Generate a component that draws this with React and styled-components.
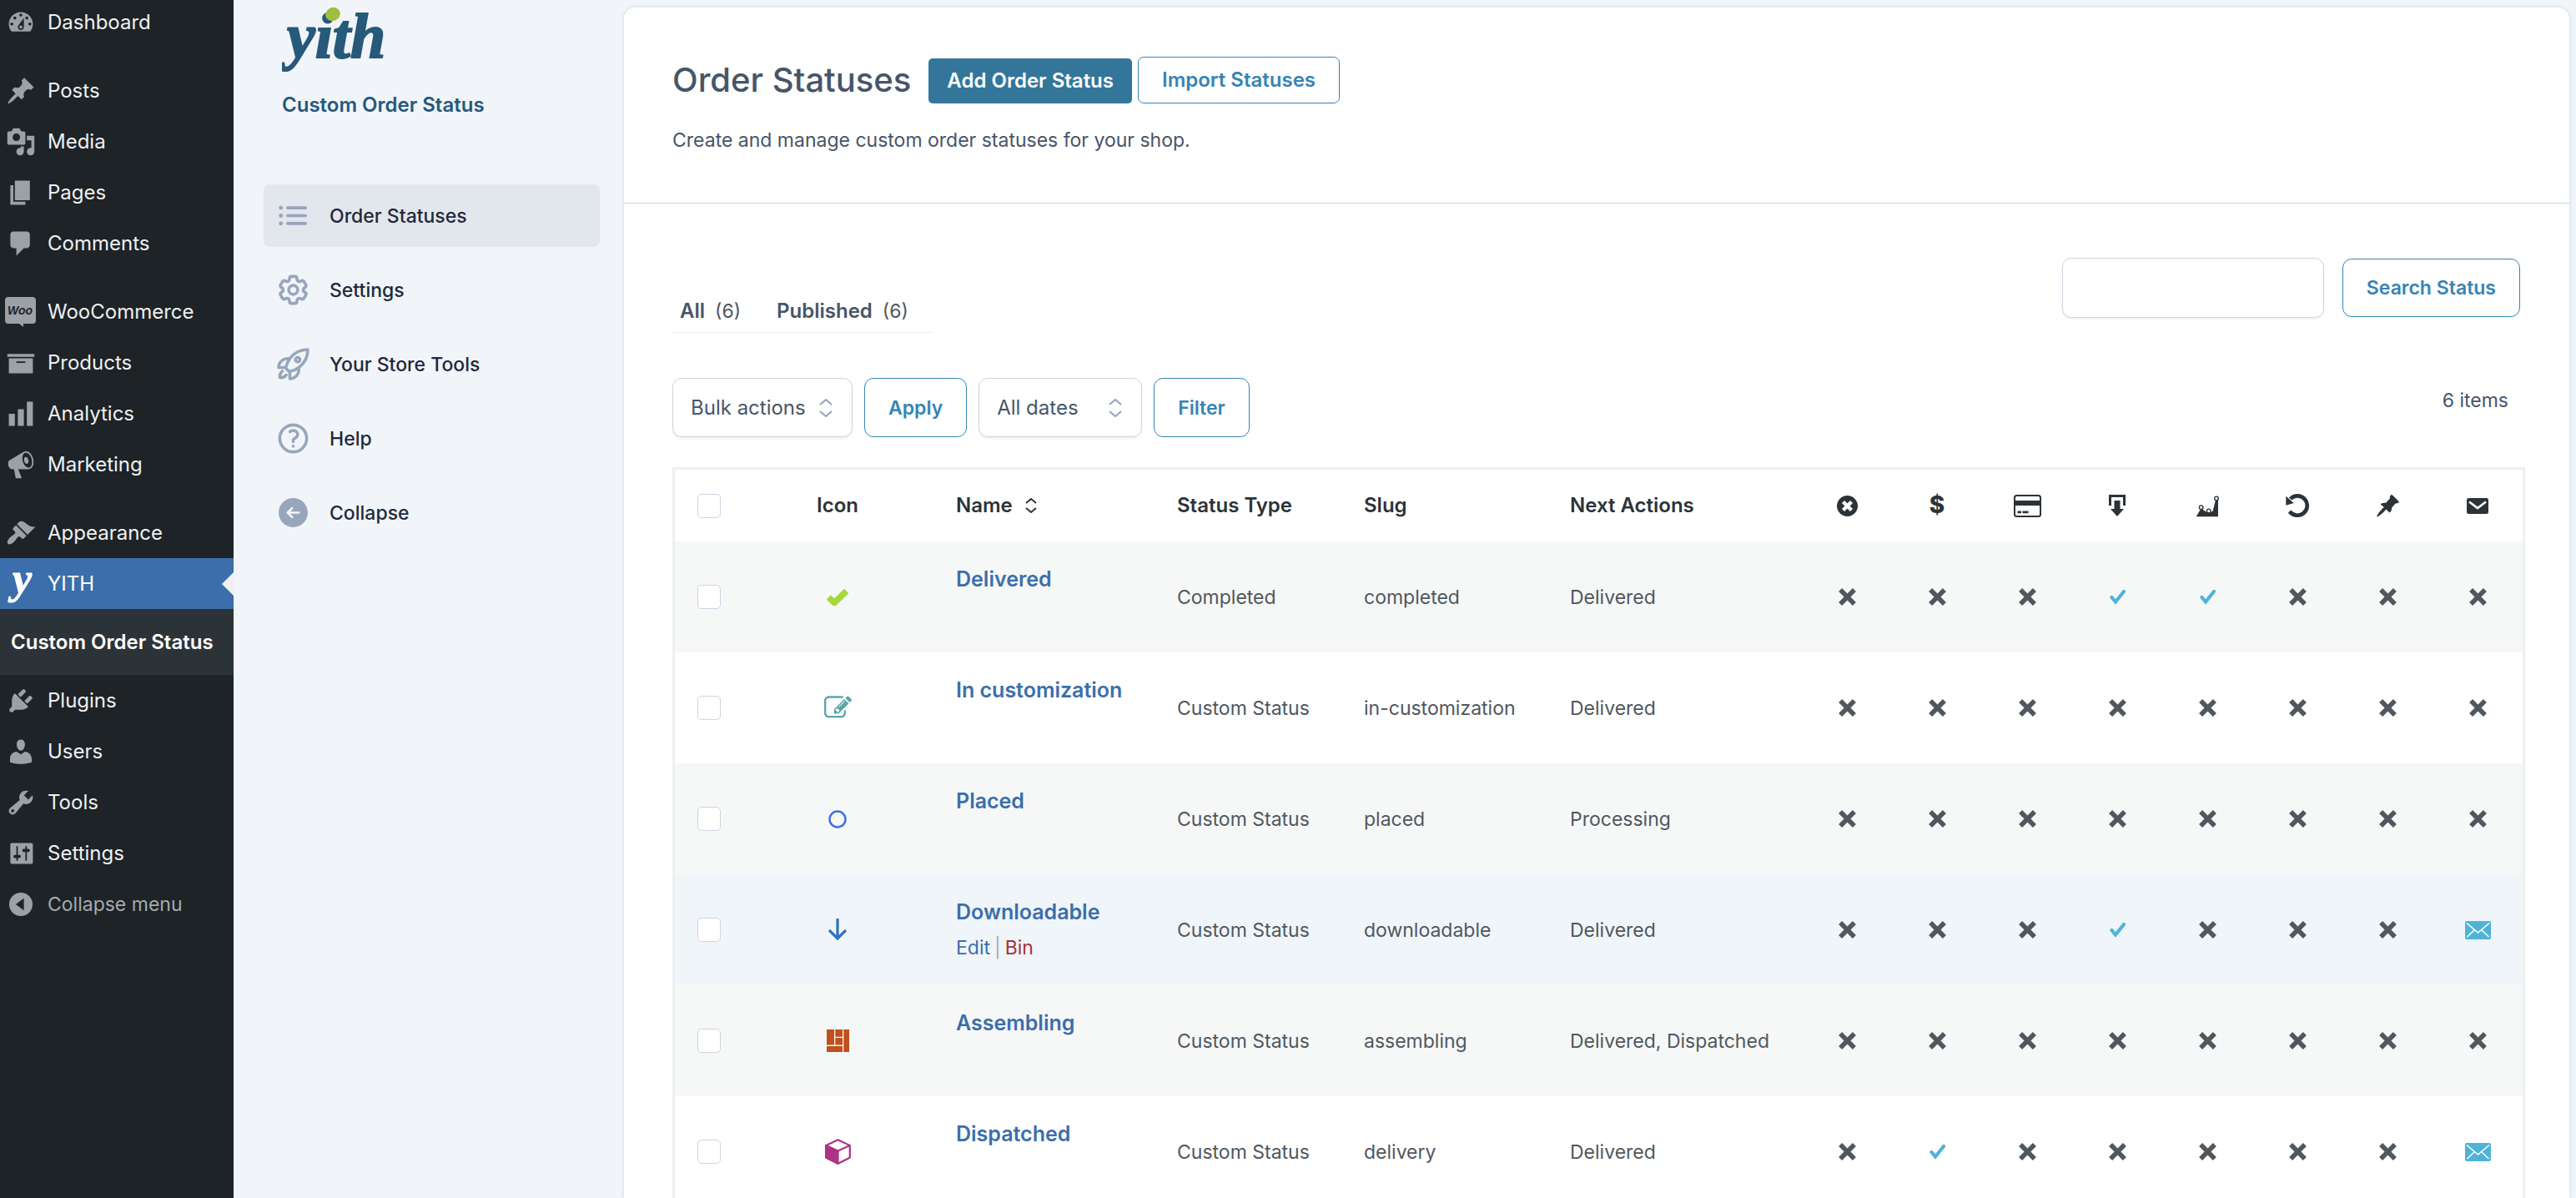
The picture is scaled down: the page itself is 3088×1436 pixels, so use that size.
import React, { useState } from "react";
import styled, { createGlobalStyle, css } from "styled-components";
import {
  HiArrowLeftCircle,
  HiOutlineCog6Tooth,
  HiOutlineListBullet,
  HiOutlineQuestionMarkCircle,
  HiOutlineRocketLaunch
} from "react-icons/hi2";

const COLORS = {
  sidebar: "#1d2327",
  submenu: "#2c3338",
  highlight: "#3b6eab",
  panel: "#f1f5fa",
  border: "#cbd5e1",
  action: "#3684b3",
  slate: "#475569",
  text: "#50575e",
  dark: "#2c3338",
  sky: "#4fb3d8"
};

// 20x20 glyphs of the admin menu
const GLYPHS = {
  dashboard:
    "M3.76 16h12.48c1.1-1.37 1.76-3.11 1.76-5 0-4.42-3.58-8-8-8s-8 3.58-8 8c0 1.89.66 3.63 1.76 5zM10 4c.55 0 1 .45 1 1s-.45 1-1 1-1-.45-1-1 .45-1 1-1zM6 6c.55 0 1 .45 1 1s-.45 1-1 1-1-.45-1-1 .45-1 1-1zm8 0c.55 0 1 .45 1 1s-.45 1-1 1-1-.45-1-1 .45-1 1-1zm-5.37 5.55L12 7v6c0 1.1-.9 2-2 2s-2-.9-2-2c0-.57.24-1.08.63-1.45zM4 10c.55 0 1 .45 1 1s-.45 1-1 1-1-.45-1-1 .45-1 1-1zm12 0c.55 0 1 .45 1 1s-.45 1-1 1-1-.45-1-1 .45-1 1-1zm-5 3c0-.55-.45-1-1-1s-1 .45-1 1 .45 1 1 1 1-.45 1-1z",
  posts:
    "M10.44 3.02l1.82-1.82 6.36 6.35-1.83 1.82c-1.05-.68-2.48-.57-3.41.36l-.75.75c-.92.93-1.04 2.35-.35 3.41l-1.83 1.82-2.41-2.41-2.8 2.79c-.42.42-3.38 2.71-3.8 2.29s1.86-3.39 2.28-3.81l2.79-2.79L4.1 9.36l1.83-1.82c1.05.69 2.48.57 3.4-.36l.75-.75c.93-.92 1.05-2.35.36-3.41z",
  media:
    "M13 11V4c0-.55-.45-1-1-1h-1.67L9 1H5L3.67 3H2c-.55 0-1 .45-1 1v7c0 .55.45 1 1 1h10c.55 0 1-.45 1-1zM7 4.5c1.38 0 2.5 1.12 2.5 2.5S8.38 9.5 7 9.5 4.5 8.38 4.5 7 5.62 4.5 7 4.5zM14 6h5v10.5c0 1.38-1.12 2.5-2.5 2.5S14 17.88 14 16.5s1.12-2.5 2.5-2.5c.17 0 .34.02.5.05V9h-3V6zm-4 8.05V13h2v3.5c0 1.38-1.12 2.5-2.5 2.5S7 17.88 7 16.5 8.12 14 9.5 14c.17 0 .34.02.5.05z",
  pages: "M6 15V2h10v13H6zm-1 1h8v2H3V5h2v11z",
  comments:
    "M5 2h9c1.1 0 2 .9 2 2v7c0 1.1-.9 2-2 2h-2l-5 5v-5H5c-1.1 0-2-.9-2-2V4c0-1.1.9-2 2-2z",
  products: "M19 4v2H1V4h18zM2 7h16v10H2V7zm11 3V9H7v1h6z",
  analytics: "M18 18V2h-4v16h4zm-6 0V7H8v11h4zm-6 0v-8H2v8h4z",
  marketing:
    "M18.15 5.94c.46 1.62.38 3.22-.02 4.48-.42 1.28-1.26 2.18-2.3 2.48-.16.06-.26.06-.4.06-.06.02-.12.02-.18.02-.06.02-.14.02-.22.02h-6.8l2.22 5.5c.02.14-.06.26-.14.34-.08.1-.24.16-.34.16H6.95c-.1 0-.26-.06-.34-.16-.08-.08-.16-.2-.14-.34l-1-5.5H4.25l-.02-.02c-.5.06-1.08-.18-1.54-.62s-.88-1.08-1.06-1.88c-.24-.8-.2-1.56-.02-2.2.18-.62.58-1.08 1.06-1.3l.02-.02 9-5.4c.1-.06.18-.1.24-.16.06-.04.14-.08.24-.12.16-.08.28-.12.5-.18 1.04-.3 2.24.1 3.22.98s1.84 2.24 2.26 3.86zm-2.58 5.98h-.02c.4-.1.74-.34 1.04-.7.58-.7.86-1.76.86-3.04 0-.64-.1-1.3-.28-1.98-.34-1.36-1.02-2.5-1.78-3.24s-1.68-1.1-2.46-.88c-.82.22-1.4.96-1.7 2-.32 1.04-.28 2.36.06 3.72.38 1.36 1 2.5 1.8 3.24.78.74 1.62 1.1 2.48.88zm-2.54-7.08c.22-.04.42-.02.62.04.38.16.76.48 1.02 1s.42 1.2.42 1.78c0 .3-.04.56-.12.8-.18.48-.44.84-.86.94-.34.1-.8-.06-1.14-.4s-.64-.86-.78-1.5c-.18-.62-.12-1.24.02-1.72s.48-.84.82-.94z",
  appearance:
    "M14.48 11.06L7.41 3.99l1.5-1.5c.5-.56 2.3-.47 3.51.32 1.21.8 1.43 1.28 2.91 2.1 1.18.64 2.45 1.26 4.45.85zm-.71.71L6.7 4.7 4.93 6.47c-.39.39-.39 1.02 0 1.41l1.06 1.06c.39.39.39 1.03 0 1.42-.6.6-1.43 1.11-2.21 1.69-.35.26-.7.53-1.01.84C1.43 14.23.4 16.08 1.4 17.07c.99 1 2.84-.03 4.18-1.36.31-.31.58-.66.85-1.02.57-.78 1.08-1.61 1.69-2.21.39-.39 1.02-.39 1.41 0l1.06 1.06c.39.39 1.02.39 1.41 0z",
  plugins:
    "M13.11 4.36L9.87 7.6 8 5.73l3.24-3.24c.35-.34 1.05-.2 1.56.32.52.51.66 1.21.31 1.55zm-8 1.77l.91-1.12 9.01 9.01-1.19.84c-.71.71-2.63 1.16-3.82 1.16H6.14L4.9 17.26c-.59.59-1.54.59-2.12 0-.59-.58-.59-1.53 0-2.12l1.24-1.24v-3.88c0-1.13.4-3.19 1.09-3.89zm7.26 3.97l3.24-3.24c.34-.35 1.04-.21 1.55.31.52.51.66 1.21.31 1.55l-3.24 3.25z",
  users:
    "M10 9.25c-2.27 0-2.73-3.44-2.73-3.44C7 4.02 7.82 2 9.97 2c2.16 0 2.98 2.02 2.71 3.81 0 0-.41 3.44-2.68 3.44zm0 2.57L12.72 10c2.39 0 4.52 2.33 4.52 4.53v2.49s-3.65 1.13-7.24 1.13c-3.65 0-7.24-1.13-7.24-1.13v-2.49c0-2.25 1.94-4.48 4.47-4.48z",
  tools:
    "M16.68 9.77c-1.34 1.34-3.3 1.67-4.95.99l-5.41 6.52c-.99.99-2.59.99-3.58 0s-.99-2.59 0-3.57l6.52-5.42c-.68-1.65-.35-3.61.99-4.95 1.28-1.28 3.12-1.62 4.72-1.06l-2.89 2.89 2.82 2.82 2.86-2.87c.53 1.58.18 3.39-1.08 4.65zM3.81 16.21c.4.39 1.04.39 1.43 0 .4-.4.4-1.04 0-1.43-.39-.4-1.03-.4-1.43 0-.39.39-.39 1.03 0 1.43z",
  settings:
    "M18 16V4c0-.55-.45-1-1-1H4c-.55 0-1 .45-1 1v12c0 .55.45 1 1 1h13c.55 0 1-.45 1-1zM8 11h1c.55 0 1 .45 1 1s-.45 1-1 1H8v1.5c0 .28-.22.5-.5.5s-.5-.22-.5-.5V13H6c-.55 0-1-.45-1-1s.45-1 1-1h1V5.5c0-.28.22-.5.5-.5s.5.22.5.5V11zm5-2h-1c-.55 0-1-.45-1-1s.45-1 1-1h1V5.5c0-.28.22-.5.5-.5s.5.22.5.5V7h1c.55 0 1 .45 1 1s-.45 1-1 1h-1v5.500c0 .28-.22.5-.5.5s-.5-.22-.5-.5V9z",
  collapse:
    "M10 2.2a7.8 7.8 0 1 0 0 15.6 7.8 7.8 0 1 0 0-15.6zM12 6v8l-5.4-4z"
};

const MENU = [
  [["dashboard", "Dashboard"]],
  [
    ["posts", "Posts"],
    ["media", "Media"],
    ["pages", "Pages"],
    ["comments", "Comments"]
  ],
  [
    ["woo", "WooCommerce"],
    ["products", "Products"],
    ["analytics", "Analytics"],
    ["marketing", "Marketing"]
  ],
  [
    ["appearance", "Appearance"],
    ["yith", "YITH"],
    ["plugins", "Plugins"],
    ["users", "Users"],
    ["tools", "Tools"],
    ["settings", "Settings"]
  ]
];

const TABS = [
  ["Order Statuses", HiOutlineListBullet],
  ["Settings", HiOutlineCog6Tooth],
  ["Your Store Tools", HiOutlineRocketLaunch],
  ["Help", HiOutlineQuestionMarkCircle],
  ["Collapse", HiArrowLeftCircle]
];

// flags: x = no, v = yes, m = e-mail sent
const STATUSES = [
  ["Delivered", "check", "Completed", "completed", "Delivered", "xxxvvxxx"],
  ["In customization", "edit", "Custom Status", "in-customization", "Delivered", "xxxxxxxx"],
  ["Placed", "circle", "Custom Status", "placed", "Processing", "xxxxxxxx"],
  ["Downloadable", "arrow", "Custom Status", "downloadable", "Delivered", "xxxvxxxm"],
  ["Assembling", "blocks", "Custom Status", "assembling", "Delivered, Dispatched", "xxxxxxxx"],
  ["Dispatched", "box", "Custom Status", "delivery", "Delivered", "xvxxxxxm"]
];

const GlobalStyle = createGlobalStyle`
  * {
    box-sizing: border-box;
  }
  body {
    margin: 0;
    background: ${COLORS.panel};
    font-family: Inter, "Liberation Sans", sans-serif;
    font-size: 23px;
    line-height: 30px;
    color: ${COLORS.text};
  }
  button, input, select {
    font: inherit;
    margin: 0;
  }
  a {
    text-decoration: none;
  }
  svg {
    display: block;
    flex-shrink: 0;
  }
`;

const Shell = styled.div`
  height: 100vh;
  display: flex;
  overflow: hidden;
`;

const Sidebar = styled.nav`
  width: 280px;
  flex-shrink: 0;
  margin-top: -4px;
  background: ${COLORS.sidebar};
`;

const MenuGroup = styled.ul`
  list-style: none;
  margin: 0 0 21px;
  padding: 0;

  &:last-of-type {
    margin: 0;
  }
`;

const menuRow = css`
  position: relative;
  width: 100%;
  height: 61px;
  display: flex;
  align-items: center;
  gap: 14px;
  padding: 0 7px;
  border: 0;
  font-size: 24px;
`;

const MenuLink = styled.a`
  ${menuRow}
  color: ${props => (props.$current ? "#fff" : "#f0f0f1")};
  background: ${props => (props.$current ? COLORS.highlight : "none")};
`;

const MenuIcon = styled.svg`
  width: 36px;
  height: 36px;
  fill: ${props => (props.$current ? "#fff" : "#9ca1a7")};
  overflow: visible;
`;

const CollapseButton = styled.button`
  ${menuRow}
  background: none;
  color: #a7aaad;
  font-size: 23px;
`;

const CurrentArrow = styled.span`
  position: absolute;
  right: 0;
  border: 14px solid transparent;
  border-left-width: 0;
  border-right-color: #f0f0f1;
`;

const SubmenuLink = styled.a`
  height: 79px;
  display: flex;
  align-items: center;
  padding: 0 13px;
  background: ${COLORS.submenu};
  color: #fff;
  font-size: 24px;
  font-weight: 600;
`;

const PluginPanel = styled.aside`
  width: 468px;
  flex-shrink: 0;
  padding: 0 29px 0 36px;
`;

const Brand = styled.div`
  padding: 0 22px;
  margin-bottom: 80px;
`;

const BrandName = styled.a`
  display: block;
  margin-top: 11px;
  color: #26597a;
  font-size: 24px;
  font-weight: 600;
`;

const PanelNav = styled.nav`
  display: flex;
  flex-direction: column;
  gap: 14px;
`;

const PanelLink = styled.a`
  height: 75px;
  display: flex;
  align-items: center;
  gap: 22px;
  padding: 0 14px;
  border-radius: 7px;
  background: ${props => (props.$active ? "#e2e6ed" : "none")};
  color: #1e293b;
  font-weight: 500;

  svg {
    width: 43px;
    height: 43px;
    color: #97a6bb;
  }

  svg[fill="none"] {
    stroke-width: 2;
  }
`;

const Card = styled.main`
  flex: 1;
  min-width: 0;
  margin: 9px 8px 0 0;
  background: #fff;
  border-radius: 14px 14px 0 0;
  box-shadow: 0 0 4px rgba(100, 116, 139, 0.25);
`;

const CardHeader = styled.header`
  padding: 59px 58px 60px;
  border-bottom: 1px solid ${COLORS.border};
`;

const TitleRow = styled.div`
  height: 56px;
  display: flex;
  align-items: flex-end;
  gap: 7px;
`;

const Title = styled.h1`
  margin: 0 14px 0 0;
  font-size: 40px;
  line-height: 56px;
  font-weight: 500;
  color: ${COLORS.slate};
`;

const Lead = styled.p`
  margin: 29px 0 0;
  color: ${COLORS.slate};
`;

const PrimaryButton = styled.button`
  height: 54px;
  padding: 0 22px;
  border: 0;
  border-radius: 5px;
  background: #34769a;
  color: #fff;
  font-size: 24px;
  font-weight: 600;
`;

const OutlineButton = styled.button`
  height: ${props => props.$height}px;
  padding: 0 28px;
  border: 1px solid ${COLORS.action};
  border-radius: ${props => (props.$height > 60 ? 11 : 7)}px;
  background: #fff;
  color: ${COLORS.action};
  font-size: ${props => (props.$height > 60 ? 23 : 24)}px;
  font-weight: 600;
`;

const CardBody = styled.div`
  padding: 65px 53px 0 58px;
`;

const Toolbar = styled.div`
  height: 90px;
  display: flex;
  justify-content: space-between;
  align-items: flex-end;
`;

const ViewList = styled.ul`
  display: flex;
  gap: 43px;
  list-style: none;
  margin: 0;
  padding: 0 29px 10px 9px;
  border-bottom: 1px solid #eceef0;
`;

const ViewLink = styled.a`
  display: flex;
  gap: 12px;
  font-weight: 600;
  font-size: 24px;
  color: ${COLORS.slate};
`;

const Count = styled.span`
  font-weight: 400;
  font-size: 23px;
  color: ${COLORS.text};
`;

const SearchForm = styled.form`
  align-self: flex-start;
  display: flex;
  align-items: center;
  gap: 22px;
  margin-right: 6px;
`;

const control = css`
  border: 1px solid ${COLORS.border};
  background: #fff;
  box-shadow: 0 2px 3px rgba(15, 23, 42, 0.06);
`;

const SearchInput = styled.input`
  ${control}
  width: 314px;
  height: 72px;
  padding: 0 22px;
  border-radius: 11px;
`;

const Filters = styled.div`
  display: flex;
  gap: 14px;
  margin: 54px 0 36px;
`;

const SelectBox = styled.div`
  position: relative;
  width: ${props => props.$width}px;

  svg {
    position: absolute;
    right: 24px;
    top: 25px;
    pointer-events: none;
  }
`;

const Select = styled.select`
  ${control}
  width: 100%;
  height: 71px;
  padding: 0 21px;
  border-radius: 11px;
  appearance: none;
  color: ${COLORS.slate};
  font-size: 24px;
`;

const ItemCount = styled.span`
  margin-left: auto;
  padding-right: 20px;
  line-height: 55px;
  color: ${COLORS.slate};
`;

const Table = styled.table`
  width: 100%;
  table-layout: fixed;
  border-spacing: 0;
  border: 3px solid #eef0f0;
`;

const HeadCell = styled.th`
  height: 86px;
  padding: 0 ${props => (props.$center ? 0 : 27)}px;
  text-align: ${props => (props.$center ? "center" : "left")};
  color: ${COLORS.dark};
  font-weight: 600;
  font-size: 24px;

  svg {
    margin: 0 auto;
  }
`;

const Dollar = styled.span`
  font-size: 28px;
  font-weight: 800;
`;

const SortLink = styled.a`
  display: flex;
  align-items: center;
  gap: 15px;
  color: inherit;

  svg {
    margin: 0;
  }
`;

const Row = styled.tr`
  background: #fff;

  &:nth-child(odd) {
    background: #f6f8f8;
  }

  ${props =>
    props.$hovered &&
    css`
      background: #f0f5fa;
    `}
`;

const Cell = styled.td`
  height: 133px;
  padding: 0 ${props => (props.$center ? 0 : 27)}px;

  > svg {
    margin: 0 auto;
  }
`;

const NameBlock = styled.div`
  min-height: 86px;
  line-height: 43px;
`;

const NameLink = styled.a`
  display: block;
  color: ${COLORS.highlight};
  font-size: 25px;
  font-weight: 600;
`;

const RowActions = styled.div`
  display: flex;
  gap: 5px;
  color: #a7aaad;
`;

const ActionLink = styled.a`
  color: ${props => (props.$danger ? "#a83232" : COLORS.highlight)};
`;

const Checkbox = styled.input`
  appearance: none;
  display: block;
  width: 28px;
  height: 29px;
  border: 1px solid ${COLORS.border};
  border-radius: 5px;
  background: #fff;

  &:checked {
    background: ${COLORS.action};
  }
`;

function MenuGlyph({ name, current }) {
  if (name === "woo") {
    return (
      <MenuIcon viewBox="0 0 36 36" aria-hidden="true">
        <path d="M3 0h29a4 4 0 0 1 4 4v24a4 4 0 0 1-4 4H21v4l-5-4H3a4 4 0 0 1-4-4V4a4 4 0 0 1 4-4z" />
        <text
          x="17"
          y="21"
          textAnchor="middle"
          fontFamily="Liberation Sans"
          fontSize="14"
          fontWeight="700"
          fontStyle="italic"
          fill={COLORS.sidebar}
        >
          Woo
        </text>
      </MenuIcon>
    );
  }
  if (name === "yith") {
    return (
      <MenuIcon $current={current} viewBox="0 0 36 36" aria-hidden="true">
        <text
          x="8"
          y="29"
          fontFamily="Liberation Serif"
          fontSize="52"
          fontWeight="700"
          fontStyle="italic"
          stroke="#fff"
          strokeWidth="1"
        >
          y
        </text>
      </MenuIcon>
    );
  }
  return (
    <MenuIcon viewBox="0 0 20 20" aria-hidden="true">
      <path fillRule="evenodd" d={GLYPHS[name]} />
    </MenuIcon>
  );
}

function Logo() {
  return (
    <svg width="140" height="100" viewBox="0 0 140 100">
      <text
        x="6"
        y="69"
        fill="#26597a"
        stroke="#26597a"
        strokeWidth="2"
        fontFamily="Liberation Serif"
        fontSize="76"
        fontWeight="700"
        fontStyle="italic"
      >
        yith
      </text>
      <ellipse cx="61" cy="17" rx="9" ry="8" fill="#a1bf3f" transform="rotate(-25 61 17)" />
    </svg>
  );
}

function Chevrons({ width, height, color, gap }) {
  const mid = height / 2;
  return (
    <svg width={width} height={height} fill="none" stroke={color} strokeWidth="2">
      <path d={`M1 ${mid - gap}L${width / 2} 1L${width - 1} ${mid - gap}`} />
      <path d={`M1 ${mid + gap}L${width / 2} ${height - 1}L${width - 1} ${mid + gap}`} />
    </svg>
  );
}

const HEAD_ICONS = [
  ["Can cancel", (
    <svg width="25" height="25" viewBox="0 0 25 25">
      <circle cx="12.5" cy="12.5" r="12.5" fill={COLORS.dark} />
      <path d="M7.5 7.5l10 10M17.5 7.5l-10 10" stroke="#fff" strokeWidth="4.4" />
    </svg>
  )],
  ["Can pay", <Dollar>$</Dollar>],
  ["Paid", (
    <svg width="33" height="27" viewBox="0 0 33 27">
      <rect x="1" y="1" width="31" height="25" rx="2.5" fill="none" stroke={COLORS.dark} strokeWidth="2" />
      <path d="M1 7h31v6H1zM4.5 19.5H9v2.7H4.5zM10.5 19.5h7v2.7h-7z" fill={COLORS.dark} />
    </svg>
  )],
  ["Downloads", (
    <svg width="20" height="26" viewBox="0 0 20 26" fill={COLORS.dark}>
      <path d="M0 0h20v13h-3V3H3v10H0z" />
      <path d="M6.500 7h7v10h4.500l-8 9-8-9h4.500z" />
    </svg>
  )],
  ["Reports", (
    <svg width="28" height="27" viewBox="0 0 84 80">
      <path d="M2 78L20 48l16 12 12 6 14-8L73 14h8v64z" fill={COLORS.dark} />
      <g fill="#fff" stroke={COLORS.dark} strokeWidth="4">
        <circle cx="20" cy="45" r="7" />
        <circle cx="75" cy="13" r="7" />
        <circle cx="47" cy="58" r="7" />
      </g>
    </svg>
  )],
  ["Restore stock", (
    <svg width="28" height="28" viewBox="0 0 84 84">
      <path d="M14 63A35 35 0 1 0 17 18" fill="none" stroke={COLORS.dark} strokeWidth="14" />
      <path d="M1 8v33l28-8z" fill={COLORS.dark} />
    </svg>
  )],
  ["Show in actions", (
    <svg width="27" height="27" viewBox="0 0 80 80">
      <path
        d="M51 1Q54-1 57 2L78 23Q81 27 77 29Q72 31 67 31L54 46Q54 58 48 62Q45 64 43 61L34 52Q16 72 3 78Q-1 79 1 75Q8 62 26 44L16 36Q13 33 17 31Q24 28 33 29L47 13Q46 6 51 1Z"
        fill={COLORS.dark}
      />
    </svg>
  )],
  ["Send email to", (
    <svg width="26" height="19" viewBox="0 0 26 19">
      <rect width="26" height="19" rx="2.5" fill={COLORS.dark} />
      <path d="M3 4.5l10 7.5 10-7.5" fill="none" stroke="#fff" strokeWidth="2.6" />
    </svg>
  )]
];

const STATUS_ICONS = {
  check: (
    <svg width="30" height="24" viewBox="0 0 28 22">
      <path
        d="M4 11l6.500 6L24 4"
        fill="none"
        stroke="#a4d83b"
        strokeWidth="7"
        strokeLinejoin="round"
      />
    </svg>
  ),
  edit: (
    <svg width="33" height="33" viewBox="0 0 1792 1792" fill="#5aa7aa">
      <path d="M888 1184l116-116-152-152-116 116v56h96v96h56zm440-720q-16-16-33 1l-350 350q-17 17-1 33t33-1l350-350q17-17 1-33zm80 594v190q0 119-84.500 203.500t-203.500 84.500h-832q-119 0-203.500-84.500t-84.500-203.500v-832q0-119 84.500-203.500t203.500-84.500h832q63 0 117 25 15 7 18 23 3 17-9 29l-49 49q-14 14-32 8-23-6-45-6h-832q-66 0-113 47t-47 113v832q0 66 47 113t113 47h832q66 0 113-47t47-113v-126q0-13 9-22l64-64q15-15 35-7t20 29zm-96-738l288 288-672 672h-288v-288zm444 132l-92 92-288-288 92-92q28-28 68-28t68 28l152 152q28 28 28 68t-28 68z" />
    </svg>
  ),
  circle: (
    <svg width="22" height="22" viewBox="0 0 22 22">
      <circle cx="11" cy="11" r="9.5" fill="none" stroke="#3f6eea" strokeWidth="2.5" />
    </svg>
  ),
  arrow: (
    <svg width="24" height="27" viewBox="0 0 24 27" fill="none" stroke="#2e74c2" strokeWidth="3.2">
      <path d="M12 0v24M2 14l10 10 10-10" />
    </svg>
  ),
  blocks: (
    <svg width="27" height="27" viewBox="0 0 27 27" fill="#c0501c">
      <path d="M0 0h9v18.5H0zM10.3 0h8.7v8.7h-8.7zM10.3 10h8.7v8.5h-8.7zM0 20h19v7H0zM20.3 0H27v27h-6.7z" />
    </svg>
  ),
  box: (
    <svg width="31" height="31" viewBox="0 0 31 31" stroke="#ad3385" strokeWidth="2.2" strokeLinejoin="round">
      <path d="M15.5 1.2L29.8 8v14.5l-14.3 7.3L1.2 22.5V8z" fill="#fff" />
      <path d="M1.2 8l14.3 6.5v15.3L1.2 22.5z" fill="#ad3385" />
      <path d="M15.5 14.5L29.8 8" fill="none" />
    </svg>
  )
};

const FLAGS = {
  x: (
    <svg width="21" height="21" viewBox="0 0 20 20" role="img" aria-label="No">
      <path d="M2 2l16 16M18 2L2 18" stroke={COLORS.text} strokeWidth="5.4" />
    </svg>
  ),
  v: (
    <svg width="20" height="18" viewBox="-1 0 20 18" role="img" aria-label="Yes">
      <path
        d="M2.5 9l4.500 5.500L17 2"
        fill="none"
        stroke={COLORS.sky}
        strokeWidth="4.2"
        strokeLinecap="round"
      />
    </svg>
  ),
  m: (
    <svg width="31" height="22" viewBox="0 0 31 22" role="img" aria-label="Email sent">
      <rect width="31" height="22" rx="2" fill={COLORS.sky} />
      <path
        d="M2 2.5L15.5 14 29 2.5M2.5 19l9-8.5M28.5 19l-9-8.5"
        fill="none"
        stroke="#fff"
        strokeWidth="1.6"
      />
    </svg>
  )
};

function AdminMenu() {
  return (
    <Sidebar>
      {MENU.map((group, index) => (
        <MenuGroup key={index}>
          {group.map(([name, label]) => (
            <li key={name}>
              <MenuLink href={"#" + name} $current={name === "yith"}>
                <MenuGlyph name={name} current={name === "yith"} />
                {label}
                {name === "yith" && <CurrentArrow />}
              </MenuLink>
              {name === "yith" && (
                <SubmenuLink href="#custom-order-status">Custom Order Status</SubmenuLink>
              )}
            </li>
          ))}
        </MenuGroup>
      ))}
      <CollapseButton type="button">
        <MenuGlyph name="collapse" />
        Collapse menu
      </CollapseButton>
    </Sidebar>
  );
}

function StatusTable() {
  const [selected, setSelected] = useState([]);
  const [hovered, setHovered] = useState("Downloadable");

  const toggle = name =>
    setSelected(
      selected.includes(name) ? selected.filter(item => item !== name) : selected.concat(name)
    );

  const toggleAll = () =>
    setSelected(selected.length === STATUSES.length ? [] : STATUSES.map(([name]) => name));

  return (
    <Table>
      <colgroup>
        {[80, 230, 265, 224, 247, 305].map((width, index) => (
          <col key={index} width={width} />
        ))}
        {HEAD_ICONS.map(([label]) => (
          <col key={label} width={108} />
        ))}
      </colgroup>
      <thead>
        <tr>
          <HeadCell>
            <Checkbox
              type="checkbox"
              aria-label="Select all"
              checked={selected.length === STATUSES.length}
              onChange={toggleAll}
            />
          </HeadCell>
          <HeadCell $center>Icon</HeadCell>
          <HeadCell>
            <SortLink href="#sort">
              Name
              <Chevrons width={14} height={18} gap={3} color={COLORS.dark} />
            </SortLink>
          </HeadCell>
          <HeadCell>Status Type</HeadCell>
          <HeadCell>Slug</HeadCell>
          <HeadCell>Next Actions</HeadCell>
          {HEAD_ICONS.map(([label, icon]) => (
            <HeadCell key={label} $center aria-label={label}>
              {icon}
            </HeadCell>
          ))}
        </tr>
      </thead>
      <tbody>
        {STATUSES.map(([name, icon, type, slug, next, flags]) => (
          <Row key={name} $hovered={hovered === name} onMouseEnter={() => setHovered(name)}>
            <Cell>
              <Checkbox
                type="checkbox"
                aria-label={"Select " + name}
                checked={selected.includes(name)}
                onChange={() => toggle(name)}
              />
            </Cell>
            <Cell $center>{STATUS_ICONS[icon]}</Cell>
            <Cell>
              <NameBlock>
                <NameLink href={"#" + slug}>{name}</NameLink>
                {hovered === name && (
                  <RowActions>
                    <ActionLink href="#edit">Edit</ActionLink>|
                    <ActionLink href="#bin" $danger>
                      Bin
                    </ActionLink>
                  </RowActions>
                )}
              </NameBlock>
            </Cell>
            <Cell>{type}</Cell>
            <Cell>{slug}</Cell>
            <Cell>{next}</Cell>
            {flags.split("").map((flag, index) => (
              <Cell key={index} $center>
                {FLAGS[flag]}
              </Cell>
            ))}
          </Row>
        ))}
      </tbody>
    </Table>
  );
}

function App() {
  return (
    <Shell>
      <GlobalStyle />
      <AdminMenu />
      <PluginPanel>
        <Brand>
          <Logo />
          <BrandName href="#custom-order-status">Custom Order Status</BrandName>
        </Brand>
        <PanelNav>
          {TABS.map(([label, Icon], index) => (
            <PanelLink key={label} href={"#tab-" + index} $active={index === 0}>
              <Icon />
              {label}
            </PanelLink>
          ))}
        </PanelNav>
      </PluginPanel>
      <Card>
        <CardHeader>
          <TitleRow>
            <Title>Order Statuses</Title>
            <PrimaryButton type="button">Add Order Status</PrimaryButton>
            <OutlineButton type="button" $height={56}>
              Import Statuses
            </OutlineButton>
          </TitleRow>
          <Lead>Create and manage custom order statuses for your shop.</Lead>
        </CardHeader>
        <CardBody>
          <Toolbar>
            <ViewList>
              <li>
                <ViewLink href="#all">
                  All <Count>(6)</Count>
                </ViewLink>
              </li>
              <li>
                <ViewLink href="#published">
                  Published <Count>(6)</Count>
                </ViewLink>
              </li>
            </ViewList>
            <SearchForm onSubmit={event => event.preventDefault()}>
              <SearchInput type="search" aria-label="Search Status" />
              <OutlineButton type="submit" $height={70}>
                Search Status
              </OutlineButton>
            </SearchForm>
          </Toolbar>
          <Filters>
            <SelectBox $width={216}>
              <Select aria-label="Bulk actions">
                <option>Bulk actions</option>
              </Select>
              <Chevrons width={16} height={22} gap={4} color="#94a3b8" />
            </SelectBox>
            <OutlineButton type="button" $height={71}>
              Apply
            </OutlineButton>
            <SelectBox $width={196}>
              <Select aria-label="All dates">
                <option>All dates</option>
              </Select>
              <Chevrons width={16} height={22} gap={4} color="#94a3b8" />
            </SelectBox>
            <OutlineButton type="button" $height={71}>
              Filter
            </OutlineButton>
            <ItemCount>6 items</ItemCount>
          </Filters>
          <StatusTable />
        </CardBody>
      </Card>
    </Shell>
  );
}

export default App;
